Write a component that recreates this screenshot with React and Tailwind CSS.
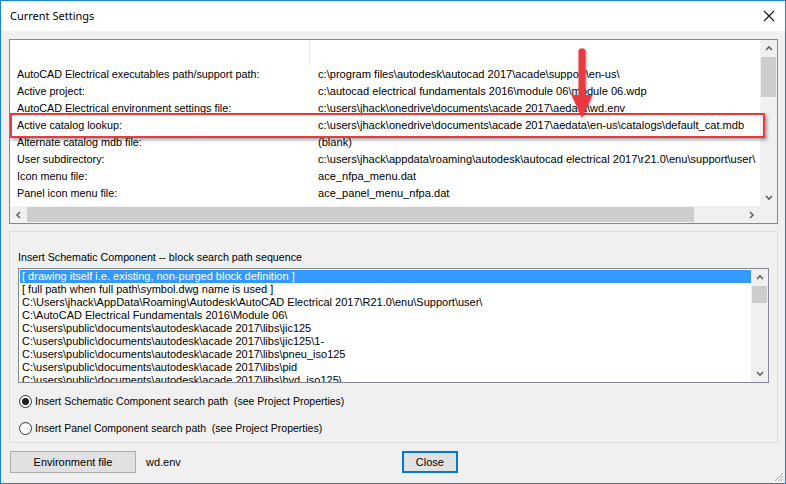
import React from "react";

const rows = [
  ["AutoCAD Electrical executables path/support path:", "c:\\program files\\autodesk\\autocad 2017\\acade\\support\\en-us\\"],
  ["Active project:", "c:\\autocad electrical fundamentals 2016\\module 06\\module 06.wdp"],
  ["AutoCAD Electrical environment settings file:", "c:\\users\\jhack\\onedrive\\documents\\acade 2017\\aedata\\wd.env"],
  ["Active catalog lookup:", "c:\\users\\jhack\\onedrive\\documents\\acade 2017\\aedata\\en-us\\catalogs\\default_cat.mdb"],
  ["Alternate catalog mdb file:", "(blank)"],
  ["User subdirectory:", "c:\\users\\jhack\\appdata\\roaming\\autodesk\\autocad electrical 2017\\r21.0\\enu\\support\\user\\"],
  ["Icon menu file:", "ace_nfpa_menu.dat"],
  ["Panel icon menu file:", "ace_panel_menu_nfpa.dat"],
];

const paths = [
  "[ drawing itself i.e. existing, non-purged block definition ]",
  "[ full path when full path\\symbol.dwg name is used ]",
  "C:\\Users\\jhack\\AppData\\Roaming\\Autodesk\\AutoCAD Electrical 2017\\R21.0\\enu\\Support\\user\\",
  "C:\\AutoCAD Electrical Fundamentals 2016\\Module 06\\",
  "C:\\users\\public\\documents\\autodesk\\acade 2017\\libs\\jic125",
  "C:\\users\\public\\documents\\autodesk\\acade 2017\\libs\\jic125\\1-",
  "C:\\users\\public\\documents\\autodesk\\acade 2017\\libs\\pneu_iso125",
  "C:\\users\\public\\documents\\autodesk\\acade 2017\\libs\\pid",
  "C:\\users\\public\\documents\\autodesk\\acade 2017\\libs\\hyd_iso125\\",
];

const Chevron = ({ dir }) => {
  const d = {
    up: "M1 5 L4 2 L7 5",
    down: "M1 2 L4 5 L7 2",
    left: "M5 1 L2 4 L5 7",
    right: "M2 1 L5 4 L2 7",
  }[dir];
  const vb = dir === "up" || dir === "down" ? "0 0 8 7" : "0 0 7 8";
  const cls = dir === "up" || dir === "down" ? "w-[8px] h-[7px]" : "w-[7px] h-[8px]";
  return (
    <svg viewBox={vb} className={cls}>
      <path d={d} fill="none" stroke="#606060" strokeWidth="1.6" />
    </svg>
  );
};

const font = { fontFamily: '"Liberation Sans", Arial, sans-serif' };

export default function App() {
  return (
    <div
      className="w-[786px] h-[484px] border border-[#1883d7] bg-[#f0f0f0] flex flex-col overflow-hidden text-[11px] text-black relative"
      style={font}
    >
      {/* Title bar */}
      <div className="h-[30px] bg-white flex items-center justify-between pl-[9px] pr-[7px] shrink-0">
        <span className="text-[11px]" style={{ fontFamily: '"Noto Sans", "Open Sans", sans-serif' }}>
          Current Settings
        </span>
        <svg viewBox="0 0 12 12" className="w-[12px] h-[12px] mr-[3px]">
          <path d="M1 1 L11 11 M11 1 L1 11" stroke="#111" strokeWidth="1.1" />
        </svg>
      </div>

      {/* Body */}
      <div className="flex flex-col pl-[8px] pr-[7px] pt-[8px]">
        {/* Top list */}
        <div className="relative w-[769px] h-[185px] border border-[#828790] bg-white flex flex-col">
          <div className="flex flex-1 min-h-0">
            <div className="flex-1 min-w-0 overflow-hidden flex flex-col">
              <div className="h-[26px] shrink-0 flex">
                <div className="w-[300px] border-r border-[#e5e5e5]" />
              </div>
              {rows.map(([k, v]) => (
                <div key={k} className="h-[17px] shrink-0 flex items-center whitespace-nowrap">
                  <div className="w-[301px] shrink-0 pl-[7px] text-[10.8px]">{k}</div>
                  <div className="pl-[7px] text-[11.1px]">{v}</div>
                </div>
              ))}
            </div>
            {/* vertical scrollbar */}
            <div className="w-[17px] bg-[#f0f0f0] flex flex-col items-center shrink-0">
              <div className="h-[17px] flex items-center justify-center"><Chevron dir="up" /></div>
              <div className="w-[15px] h-[40px] bg-[#cdcdcd]" />
              <div className="flex-1" />
              <div className="h-[17px] flex items-center justify-center"><Chevron dir="down" /></div>
            </div>
          </div>
          {/* horizontal scrollbar */}
          <div className="h-[17px] flex shrink-0">
            <div className="flex-1 bg-[#f0f0f0] flex items-center">
              <div className="w-[17px] flex items-center justify-center"><Chevron dir="left" /></div>
              <div className="w-[667px] h-[15px] bg-[#cdcdcd]" />
              <div className="flex-1" />
              <div className="w-[17px] flex items-center justify-center"><Chevron dir="right" /></div>
            </div>
            <div className="w-[17px] bg-[#f0f0f0]" />
          </div>

          {/* Red annotation box */}
          <div className="absolute left-[0px] top-[73px] w-[755px] h-[25px] border-[2.5px] border-[#ea3a40] shadow-[2px_2px_3px_rgba(0,0,0,0.35)]" />
          {/* Red arrow */}
          <svg className="absolute left-[552px] top-[6px] w-[40px] h-[76px]" viewBox="0 0 40 76" style={{ filter: "drop-shadow(1.5px 1.5px 1.5px rgba(0,0,0,0.35))" }}>
            <path d="M16.5 4 Q20 0.5 23.5 4 L23.5 49 L30.5 49 L20 72 L9.5 49 L16.5 49 Z" fill="#ea3a40" />
          </svg>
        </div>

        {/* Group panel */}
        <div className="mt-[7px] w-[769px] h-[212px] border border-[#dcdcdc] flex flex-col pl-[8px]">
          <div className="h-[36px] pt-[17px] text-[10.7px]">Insert Schematic Component -- block search path sequence</div>
          <div className="w-[751px] h-[115px] border border-[#828790] bg-white flex">
            <div className="flex-1 min-w-0 overflow-hidden pt-[1px] pl-[1px]">
              {paths.map((p, i) => (
                <div
                  key={i}
                  className={
                    "h-[13px] leading-[13px] pl-[2px] whitespace-nowrap " +
                    (i === 0 ? "bg-[#3399ff] text-white" : "")
                  }
                >
                  {p}
                </div>
              ))}
            </div>
            <div className="w-[17px] bg-[#f0f0f0] flex flex-col items-center shrink-0">
              <div className="h-[17px] flex items-center justify-center"><Chevron dir="up" /></div>
              <div className="w-[15px] h-[17px] bg-[#cdcdcd]" />
              <div className="flex-1" />
              <div className="h-[17px] flex items-center justify-center"><Chevron dir="down" /></div>
            </div>
          </div>

          <div className="flex flex-col mt-[12px] gap-[14px] pl-[1px]">
            {[true, false].map((on, i) => (
              <label key={i} className="flex items-center h-[13px]">
                <span className="w-[13px] h-[13px] rounded-full border border-[#333] bg-white flex items-center justify-center shrink-0">
                  {on && <span className="w-[7px] h-[7px] rounded-full bg-[#222]" />}
                </span>
                <span className="ml-[3px] whitespace-pre text-[10.5px]">
                  {i === 0
                    ? "Insert Schematic Component search path  (see Project Properties)"
                    : "Insert Panel Component search path  (see Project Properties)"}
                </span>
              </label>
            ))}
          </div>
        </div>

        {/* Bottom buttons */}
        <div className="flex items-center mt-[8px] pl-[1px]">
          <div className="w-[126px] h-[22px] bg-[#e1e1e1] border border-[#adadad] flex items-center justify-center">
            Environment file
          </div>
          <span className="ml-[10px]">wd.env</span>
          <div className="ml-[221px] w-[56px] h-[22px] bg-[#e1e1e1] border-2 border-[#0078d7] flex items-center justify-center">
            Close
          </div>
        </div>
      </div>

      {/* resize grip */}
      <svg className="absolute right-[1px] bottom-[1px] w-[12px] h-[12px]" viewBox="0 0 12 12">
        <path d="M11 3 L3 11 M11 6 L6 11 M11 9 L9 11" stroke="#b0b0b0" strokeWidth="1" />
      </svg>
    </div>
  );
}
